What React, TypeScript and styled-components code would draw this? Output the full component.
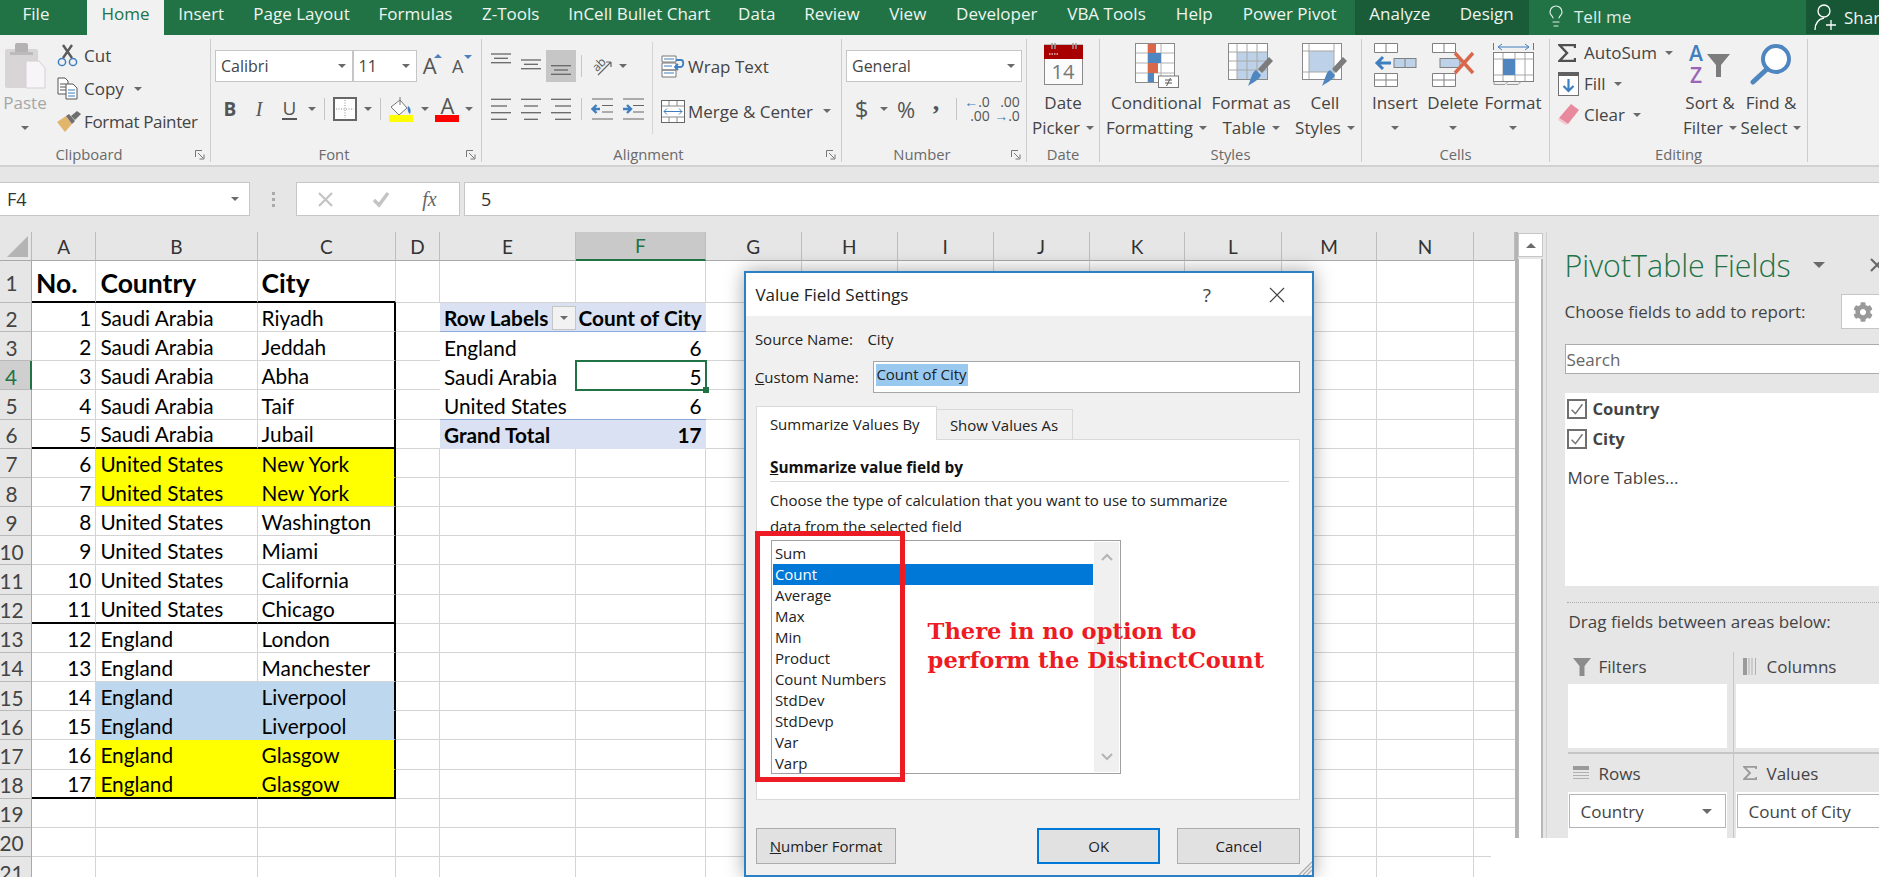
import React from "react";
import styled, { createGlobalStyle } from "styled-components";
import { Lightbulb } from "lucide-react";
import { FaCog } from "react-icons/fa";

const GlobalStyle = createGlobalStyle`
  html, body {
    margin: 0;
    padding: 0;
    background: #fff;
  }
  * {
    box-sizing: border-box;
  }
`;

const SEGOE = `"Open Sans", "Noto Sans", sans-serif`;
const CALIBRI = `Lato, "Liberation Sans", sans-serif`;

const Page = styled.div`
  position: relative;
  width: 1879px;
  height: 877px;
  overflow: hidden;
  display: flex;
  flex-direction: column;
  background: #e6e6e6;
  font-family: ${SEGOE};
  color: #444;
`;

/* ---------- title bar ---------- */

const TitleBar = styled.div`
  flex: none;
  height: 35px;
  display: flex;
  background: #217346;
  color: #eef5f0;
  font-size: 17px;
`;

const Tab = styled.div<{ $w: number; $active?: boolean; $shift?: number }>`
  flex: none;
  width: ${(p) => p.$w}px;
  padding-right: ${(p) => p.$shift || 0}px;
  text-align: center;
  line-height: 28px;
  white-space: nowrap;
  background: ${(p) => (p.$active ? "#f1f1f1" : "transparent")};
  color: ${(p) => (p.$active ? "#217346" : "inherit")};
`;

const ContextTabs = styled.div`
  flex: none;
  display: flex;
  margin-left: 3px;
  background: #1b5c38;
`;

const TellMe = styled.div`
  display: flex;
  align-items: center;
  gap: 6px;
  margin-left: 15px;
  padding-bottom: 3px;
  color: #dfece4;
  svg {
    flex: none;
  }
`;

const Share = styled.div`
  flex: none;
  margin-left: auto;
  width: 73px;
  padding-left: 8px;
  display: flex;
  align-items: center;
  gap: 8px;
  height: 34px;
  background: #185735;
  overflow: hidden;
  white-space: nowrap;
  svg {
    flex: none;
  }
`;

/* ---------- ribbon ---------- */

const Ribbon = styled.div`
  flex: none;
  height: 132px;
  padding-top: 4px;
  display: flex;
  align-items: flex-start;
  background: #f1f1f1;
  border-bottom: 2px solid #d2d2d2;
  font-size: 17px;
`;

const Group = styled.section<{ $w: number }>`
  flex: none;
  width: ${(p) => p.$w}px;
  height: 123px;
  display: flex;
  flex-direction: column;
  border-right: 1px solid #cdcdcd;
`;

const GroupBody = styled.div<{ $pad?: number }>`
  flex: 1;
  min-height: 0;
  display: flex;
  padding-left: ${(p) => p.$pad || 0}px;
`;

const GroupLabel = styled.div<{ $pad?: number }>`
  position: relative;
  flex: none;
  height: 16px;
  padding-right: ${(p) => p.$pad || 0}px;
  text-align: center;
  font-size: 14.8px;
  line-height: 17px;
  color: #6a6a6a;
`;

const Launcher = styled.svg`
  position: absolute;
  right: 5px;
  top: 4px;
`;

const Caret = styled.span<{ $gap?: number; $size?: number }>`
  display: inline-block;
  flex: none;
  justify-self: start;
  margin-left: ${(p) => p.$gap ?? 6}px;
  vertical-align: middle;
  border-left: ${(p) => p.$size || 4}px solid transparent;
  border-right: ${(p) => p.$size || 4}px solid transparent;
  border-top: ${(p) => p.$size || 4}px solid #6a6a6a;
`;

const BigButton = styled.div<{ $w: number; $muted?: boolean }>`
  flex: none;
  width: ${(p) => p.$w}px;
  display: flex;
  flex-direction: column;
  align-items: center;
  color: ${(p) => (p.$muted ? "#a6a6a6" : "#444")};
`;

const BigIcon = styled.div`
  flex: none;
  height: 52px;
  padding-top: 4px;
`;

const BigLine = styled.div`
  height: 24.5px;
  line-height: 24px;
  white-space: nowrap;
  display: flex;
  align-items: center;
  justify-content: center;
`;

const SmallStack = styled.div<{ $left: number; $w: number; $row: number; $top?: number }>`
  flex: none;
  margin-left: ${(p) => p.$left}px;
  margin-top: ${(p) => p.$top || 0}px;
  width: ${(p) => p.$w}px;
  display: grid;
  grid-auto-rows: ${(p) => p.$row}px;
`;

const SmallRow = styled.div<{ $slot?: number }>`
  display: grid;
  grid-template-columns: ${(p) => p.$slot || 27}px auto 1fr;
  align-items: center;
  white-space: nowrap;
`;

const Tight = styled.span`
  letter-spacing: -0.35px;
`;

const TwoRows = styled.div<{ $w?: number; $gap?: number }>`
  flex: none;
  width: ${(p) => (p.$w ? `${p.$w}px` : "auto")};
  padding-top: 11px;
  display: flex;
  flex-direction: column;
  gap: ${(p) => p.$gap ?? 11}px;
`;

const ToolRow = styled.div`
  height: 32px;
  display: flex;
  align-items: center;
`;

const Tool = styled.div<{ $w: number; $on?: boolean }>`
  flex: none;
  width: ${(p) => p.$w}px;
  height: 32px;
  display: flex;
  align-items: center;
  justify-content: center;
  background: ${(p) => (p.$on ? "#c6c6c6" : "transparent")};
  color: #555;
`;

const ToolRule = styled.div`
  width: 1px;
  height: 22px;
  background: #c6c6c6;
`;

const VRule = styled.div`
  flex: none;
  width: 1px;
  height: 92px;
  margin: 3px 8px 0 5px;
  background: #d4d4d4;
`;

const ComboBox = styled.div<{ $w: number }>`
  flex: none;
  width: ${(p) => p.$w}px;
  height: 32px;
  display: flex;
  align-items: center;
  justify-content: space-between;
  padding: 0 6px 0 5px;
  background: #fff;
  border: 1px solid #c6c6c6;
  font-size: 16px;
  color: #444;
`;

const FontGlyph = styled.span<{ $size: number; $weight?: number; $italic?: boolean; $serif?: boolean; $lift?: number }>`
  font-family: ${(p) => (p.$serif ? `"Liberation Serif", serif` : SEGOE)};
  font-size: ${(p) => p.$size}px;
  font-weight: ${(p) => p.$weight || 400};
  font-style: ${(p) => (p.$italic ? "italic" : "normal")};
  line-height: 1;
  color: #555;
  margin-bottom: ${(p) => p.$lift || 0}px;
`;

const GrowGlyph = styled.div`
  position: relative;
  width: 100%;
  text-align: center;
`;

const GrowArrow = styled.span<{ $down?: boolean }>`
  position: absolute;
  right: 1px;
  top: 0;
  border-left: 4px solid transparent;
  border-right: 4px solid transparent;
  ${(p) => (p.$down ? "border-top: 4px solid #4a80bb;" : "border-bottom: 4px solid #4a80bb;")}
`;

const Underlined = styled.span`
  border-bottom: 2px solid #555;
  padding: 0 1px;
  line-height: 18px;
`;

const DecimalStack = styled.div`
  display: grid;
  grid-template-columns: auto;
  justify-items: end;
  font-size: 14px;
  line-height: 14px;
  color: #555;
  span {
    color: #3f7fbf;
    font-weight: 700;
  }
`;

/* ---------- formula bar ---------- */

const FormulaBar = styled.div`
  flex: none;
  height: 65px;
  padding-top: 15px;
  display: flex;
  align-items: flex-start;
  background: #e6e6e6;
`;

const NameBox = styled.div`
  width: 250px;
  height: 34px;
  padding: 0 10px 0 7px;
  display: flex;
  align-items: center;
  justify-content: space-between;
  background: #fff;
  border: 1px solid #c6c6c6;
  border-left: none;
  font-size: 18px;
  color: #333;
`;

const Grip = styled.div`
  width: 46px;
  height: 34px;
  display: flex;
  flex-direction: column;
  align-items: center;
  justify-content: center;
  gap: 3px;
  i {
    display: block;
    width: 3px;
    height: 3px;
    background: #aaa;
  }
`;

const FxButtons = styled.div`
  width: 164px;
  height: 34px;
  display: grid;
  grid-template-columns: 57px 54px 1fr;
  align-items: center;
  justify-items: center;
  padding: 0 8px 0 0;
  background: #fff;
  border: 1px solid #c6c6c6;
`;

const FxText = styled.span`
  font-family: "Liberation Serif", serif;
  font-style: italic;
  font-size: 20px;
  color: #666;
`;

const FormulaInput = styled.div`
  flex: 1;
  height: 34px;
  margin-left: 4px;
  padding-left: 16px;
  display: flex;
  align-items: center;
  background: #fff;
  border: 1px solid #c6c6c6;
  border-right: none;
  font-size: 18px;
  color: #333;
`;

/* ---------- sheet ---------- */

const Workspace = styled.div`
  flex: 1;
  min-height: 0;
  display: flex;
`;

const Sheet = styled.div`
  flex: none;
  width: 1518px;
  height: 645px;
  overflow: hidden;
  display: grid;
  grid-template-columns: 32px 64.4px 161.2px 138.4px 44px 136px 129.7px 96.1px 95.8px 96.2px 95.8px 95.8px 96.2px 95.9px 96.1px 41.4px;
  grid-auto-rows: 29.17px;
  grid-template-rows: 29px 42px;
  align-content: start;
  background: #fff;
  border-right: 3px solid #b4b4b4;
  font-family: ${CALIBRI};
  font-size: 20.8px;
  color: #000;
`;

const Corner = styled.div`
  background: #e6e6e6;
  border-right: 1px solid #b9b9b9;
  border-bottom: 1px solid #a9a9a9;
  padding: 4px 0 0 7px;
`;

const ColHead = styled.div<{ $active?: boolean }>`
  display: flex;
  align-items: center;
  justify-content: center;
  font-size: 19px;
  background: ${(p) => (p.$active ? "#c9c9c9" : "#e6e6e6")};
  color: ${(p) => (p.$active ? "#217346" : "#333")};
  border-right: 1px solid #bdbdbd;
  border-bottom: ${(p) => (p.$active ? "2px solid #217346" : "1px solid #a9a9a9")};
`;

const RowHead = styled.div<{ $active?: boolean }>`
  display: flex;
  align-items: center;
  justify-content: center;
  padding: 2px 8px 0 0;
  background: ${(p) => (p.$active ? "#cfcfcf" : "#e6e6e6")};
  color: ${(p) => (p.$active ? "#217346" : "#444")};
  border-right: ${(p) => (p.$active ? "2px solid #217346" : "1px solid #a9a9a9")};
  border-bottom: 1px solid #b9b9b9;
`;

const Cell = styled.div<{
  $fill?: string;
  $right?: boolean;
  $bold?: boolean;
  $large?: boolean;
  $bottom?: string;
  $side?: string;
}>`
  position: relative;
  min-width: 0;
  display: flex;
  align-items: center;
  justify-content: ${(p) => (p.$right ? "flex-end" : "flex-start")};
  padding: ${(p) => (p.$large ? "3px 0 0 4px" : "1px 4px 0")};
  white-space: nowrap;
  background: ${(p) => p.$fill || "#fff"};
  font-weight: ${(p) => (p.$bold ? 700 : 400)};
  font-size: ${(p) => (p.$large ? "26.5px" : "inherit")};
  border-right: ${(p) => p.$side || "1px solid #d4d4d4"};
  border-bottom: ${(p) => p.$bottom || "1px solid #d4d4d4"};
`;

const FilterButton = styled.div`
  flex: none;
  width: 24px;
  height: 24px;
  margin-left: auto;
  margin-right: -4px;
  display: flex;
  align-items: center;
  justify-content: center;
  background: #f2f2f2;
  border: 1px solid #c6c6c6;
`;

const CellCursor = styled.div`
  position: absolute;
  inset: -1px;
  border: 2px solid #217346;
  z-index: 2;
`;

const FillHandle = styled.div`
  position: absolute;
  right: -4px;
  bottom: -4px;
  width: 6px;
  height: 6px;
  background: #217346;
`;

const ScrollBar = styled.div`
  flex: none;
  width: 25px;
  height: 645px;
  display: flex;
  flex-direction: column;
  gap: 2px;
  padding-top: 1px;
`;

const ScrollUp = styled.div`
  height: 24px;
  display: flex;
  align-items: center;
  justify-content: center;
  background: #fff;
  border: 1px solid #c6c6c6;
`;

const ScrollArrow = styled.span`
  border-left: 5px solid transparent;
  border-right: 5px solid transparent;
  border-bottom: 5px solid #6a6a6a;
`;

const ScrollTrack = styled.div`
  flex: 1;
  background: #fff;
  border-left: 1px solid #b8b8b8;
  border-right: 2px solid #b8b8b8;
`;

/* ---------- field list ---------- */

const FieldPane = styled.aside`
  flex: none;
  width: 336px;
  overflow: hidden;
  padding: 16px 0 0 17.5px;
  margin-left: 3px;
  border-left: 1px solid #cfcfcf;
  color: #444;
  font-size: 17px;
`;

const PaneTitle = styled.div`
  height: 34px;
  display: flex;
  align-items: center;
  white-space: nowrap;
  font-size: 30.4px;
  font-weight: 300;
  color: #217346;
`;

const PaneClose = styled.svg`
  margin-left: 44px;
  flex: none;
`;

const PaneRow = styled.div`
  height: 35px;
  margin-top: 12px;
  width: 340px;
  display: flex;
  align-items: center;
  white-space: nowrap;
`;

const GearBox = styled.div`
  flex: none;
  margin-left: auto;
  width: 64px;
  height: 35px;
  padding-left: 11px;
  display: flex;
  align-items: center;
  background: #fff;
  border: 1px solid #c6c6c6;
`;

const SearchBox = styled.div`
  height: 30px;
  width: 340px;
  margin-top: 15px;
  padding-left: 1px;
  display: flex;
  align-items: center;
  background: #fff;
  border: 1px solid #ababab;
  color: #666;
`;

const FieldList = styled.div`
  height: 193px;
  width: 340px;
  margin-top: 20px;
  padding: 0 0 0 2px;
  background: #fff;
`;

const FieldItem = styled.div`
  height: 31px;
  margin-top: -1px;
  display: flex;
  align-items: center;
  gap: 6px;
  font-size: 16.6px;
  font-weight: 700;
  color: #444;
`;

const Check = styled.span`
  flex: none;
  width: 20px;
  height: 20px;
  display: flex;
  align-items: center;
  justify-content: center;
  background: #fff;
  border: 2px solid #6f6f6f;
`;

const MoreTables = styled.div`
  margin-top: 12px;
  padding-left: 1px;
`;

const DottedRule = styled.div`
  width: 340px;
  margin: 16px 0 0 2px;
  border-top: 1px dotted #a9a9a9;
`;

const DragText = styled.div`
  margin: 7px 0 0 4px;
  height: 24px;
  line-height: 24px;
  white-space: nowrap;
`;

const Areas = styled.div`
  width: 340px;
  margin: 18px 0 0 3px;
  display: grid;
  grid-template-columns: 166px 1fr;
  grid-template-rows: 102px 84px;
`;

const Area = styled.div<{ $left?: boolean; $top?: boolean }>`
  min-width: 0;
  padding-left: ${(p) => (p.$left ? 0 : 2)}px;
  padding-right: ${(p) => (p.$left ? 6 : 0)}px;
  border-right: ${(p) => (p.$left ? "1px solid #c6c6c6" : "none")};
  border-bottom: ${(p) => (p.$top ? "2px solid #c6c6c6" : "none")};
`;

const AreaHead = styled.div<{ $h: number; $left?: boolean; $lift?: number }>`
  height: ${(p) => p.$h}px;
  padding-left: ${(p) => (p.$left ? 5 : 7)}px;
  padding-bottom: ${(p) => p.$lift || 0}px;
  display: grid;
  grid-template-columns: ${(p) => (p.$left ? 26 : 24)}px 1fr;
  align-items: center;
`;

const AreaBox = styled.div<{ $h: number }>`
  height: ${(p) => p.$h}px;
  padding: 2px 1px;
  background: #fff;
`;

const AreaChip = styled.div`
  height: 34px;
  padding: 0 13px 0 11px;
  display: flex;
  align-items: center;
  justify-content: space-between;
  white-space: nowrap;
  background: #fff;
  border: 1px solid #b4b4b4;
`;

const ScreenshotEdge = styled.div`
  position: absolute;
  left: 1491px;
  top: 838px;
  right: 0;
  bottom: 0;
  background: #fff;
  z-index: 3;
`;

/* ---------- dialog ---------- */

const Dialog = styled.div`
  position: absolute;
  left: 744.4px;
  top: 271px;
  width: 569.4px;
  height: 606px;
  display: flex;
  flex-direction: column;
  background: #f0f0f0;
  border: 2px solid #2b7fc4;
  box-shadow: 0 0 18px rgba(0, 0, 0, 0.35);
  color: #222;
  font-size: 15px;
  z-index: 2;
`;

const DialogTitle = styled.div`
  flex: none;
  height: 43px;
  display: flex;
  align-items: center;
  padding-left: 9px;
  background: #fff;
  font-size: 17px;
  color: #222;
`;

const TitleButton = styled.div<{ $first?: boolean }>`
  flex: none;
  width: 70px;
  margin-left: ${(p) => (p.$first ? "auto" : 0)};
  display: flex;
  justify-content: center;
  font-size: 19px;
  color: #444;
`;

const DialogBody = styled.div`
  flex: 1;
  padding: 11px 11.5px 0 9.5px;
`;

const FormRow = styled.div<{ $label: number; $top?: number; $h: number }>`
  height: ${(p) => p.$h}px;
  margin-top: ${(p) => p.$top || 0}px;
  margin-left: -1px;
  display: grid;
  grid-template-columns: ${(p) => p.$label + 1}px 1fr;
  align-items: center;
`;

const TextInput = styled.div`
  height: 32px;
  padding: 2px;
  background: #fff;
  border: 1px solid #a6a6a6;
`;

const Selected = styled.span`
  display: inline-block;
  height: 22px;
  line-height: 21px;
  padding-right: 1px;
  background: #99c9ef;
`;

const TabStrip = styled.div`
  margin-top: 13px;
  height: 34px;
  display: flex;
  align-items: flex-end;
  position: relative;
  z-index: 1;
`;

const DialogTab = styled.div<{ $active?: boolean }>`
  flex: none;
  width: ${(p) => (p.$active ? 181 : 136)}px;
  height: ${(p) => (p.$active ? 34 : 31)}px;
  padding-left: 13px;
  display: flex;
  align-items: center;
  white-space: nowrap;
  background: ${(p) => (p.$active ? "#fff" : "#f0f0f0")};
  border: 1px solid #d9d9d9;
  border-bottom: ${(p) => (p.$active ? "none" : "1px solid #d9d9d9")};
  border-left: ${(p) => (p.$active ? "1px solid #d9d9d9" : "none")};
`;

const TabPane = styled.div`
  height: 361px;
  margin-top: -1px;
  padding: 16px 0 0 13px;
  background: #fff;
  border: 1px solid #d9d9d9;
`;

const PaneHeading = styled.div`
  width: 519px;
  height: 26px;
  line-height: 24px;
  font-size: 15.4px;
  font-weight: 700;
  color: #111;
  border-bottom: 1px solid #d9d9d9;
`;

const Hotkey = styled.span`
  text-decoration: underline;
`;

const HelpText = styled.div`
  margin-top: 6px;
  line-height: 25.5px;
  white-space: nowrap;
`;

const ListBox = styled.div`
  margin: 1px 0 0 1px;
  width: 350.4px;
  height: 234px;
  display: flex;
  padding: 1px;
  background: #fff;
  border: 1px solid #a0a0a0;
`;

const ListItems = styled.div`
  flex: 1;
  padding-top: 1px;
`;

const ListItem = styled.div<{ $on?: boolean }>`
  height: 21px;
  line-height: 21px;
  padding-left: 2px;
  background: ${(p) => (p.$on ? "#0078d7" : "transparent")};
  color: ${(p) => (p.$on ? "#fff" : "#222")};
`;

const ListScroll = styled.div`
  flex: none;
  width: 25px;
  margin-left: 1px;
  padding: 11px 0;
  display: flex;
  flex-direction: column;
  align-items: center;
  justify-content: space-between;
  background: #f0f0f0;
`;

const DialogFooter = styled.div`
  margin-top: 28px;
  display: flex;
  height: 36px;
`;

const DialogButton = styled.div<{ $w: number; $primary?: boolean; $push?: boolean }>`
  flex: none;
  width: ${(p) => p.$w}px;
  margin-left: ${(p) => (p.$push ? "auto" : p.$primary ? 0 : "17px")};
  display: flex;
  align-items: center;
  justify-content: center;
  white-space: nowrap;
  background: #e1e1e1;
  border: ${(p) => (p.$primary ? "2px solid #0078d7" : "1px solid #adadad")};
`;

const NumberFormatButton = styled(DialogButton)`
  margin-left: 0;
`;

const RedBox = styled.div`
  position: absolute;
  left: 8.6px;
  top: 257.7px;
  width: 150px;
  height: 251px;
  border: 5px solid #ed1c24;
  pointer-events: none;
`;

const RedNote = styled.div`
  position: absolute;
  left: 181.2px;
  top: 344px;
  font-family: "DejaVu Serif", serif;
  font-weight: 700;
  font-size: 22.6px;
  line-height: 29px;
  white-space: nowrap;
  color: #ed1c24;
`;

const ResizeGrip = styled.svg`
  position: absolute;
  right: 0;
  bottom: 0;
`;

/* ---------- icons ---------- */

const PasteIcon = () => (
  <svg width="41" height="46" viewBox="0 0 41 46">
    <rect x="0" y="6" width="33" height="39" rx="2" fill="#d8d5d6" />
    <rect x="10" y="0" width="13" height="10" rx="2" fill="#b5b2b3" />
    <rect x="5" y="9" width="23" height="3" fill="#bdbabb" />
    <path d="M21 18h13l6 7v20H21z" fill="#f8f5f8" stroke="#d4d0d4" />
  </svg>
);

const ScissorsIcon = () => (
  <svg width="21" height="23" viewBox="0 0 21 23">
    <path d="M15 1 6 14M6 1l9 13" stroke="#5a5a5a" strokeWidth="2.4" fill="none" />
    <circle cx="5" cy="18" r="3.6" fill="none" stroke="#3f7fbf" strokeWidth="1.5" />
    <circle cx="16" cy="18" r="3.6" fill="none" stroke="#3f7fbf" strokeWidth="1.5" />
  </svg>
);

const CopyIcon = () => (
  <svg width="21" height="23" viewBox="0 0 21 23">
    <path d="M1 1h7l3 3v13H1z" fill="#fff" stroke="#555" />
    <path d="M3 7h6M3 10h6M3 13h6" stroke="#555" />
    <path d="M9 7h7l4 4v11H9z" fill="#fff" stroke="#555" />
    <path d="M11 13h7M11 16h7M11 19h7" stroke="#3f7fbf" />
  </svg>
);

const PainterIcon = () => (
  <svg width="24" height="21" viewBox="0 0 24 21">
    <path d="M0 11 9 5l6 8-7 8z" fill="#e2b56d" />
    <path d="M9 5l3-2 6 7-3 3z" fill="#6f6f6f" />
    <path d="M14 5l6-5 4 3-6 6z" fill="#6f6f6f" />
  </svg>
);

const LauncherIcon = () => (
  <Launcher width="10" height="10" viewBox="0 0 10 10">
    <path d="M.5 7V.5H7M3 3l5 5M9 4.5V9H4.5" stroke="#777" fill="none" />
  </Launcher>
);

const BorderIcon = () => (
  <svg width="24" height="24" viewBox="0 0 24 24">
    <rect x="1" y="1" width="22" height="22" fill="#fff" stroke="#666" strokeWidth="2" />
    <path d="M12 3v18M3 12h18" stroke="#888" strokeDasharray="1 1.5" />
  </svg>
);

const FillColorIcon = () => (
  <svg width="25" height="25" viewBox="0 0 25 25">
    <path d="M2 10 11 3l7 8-8 7z" fill="#fff" stroke="#777" />
    <path d="M11 0v8" stroke="#777" />
    <path d="M19 9c3 2 3 5 2 8-2-1-3-5-2-8z" fill="#3f7fbf" />
    <rect x="0" y="18" width="24" height="7" fill="#ffff00" />
  </svg>
);

const FontColorIcon = () => (
  <svg width="25" height="25" viewBox="0 0 25 25">
    <text x="12.5" y="17" textAnchor="middle" fontFamily="Open Sans" fontSize="22" fill="#555">A</text>
    <rect x="0" y="18" width="24" height="7" fill="#ff0000" />
  </svg>
);

// align icons: each row is [from, to, y] inside the 32px tool cell
const Lines = ({ rows }: { rows: [number, number, number][] }) => (
  <svg width="20" height="32" viewBox="0 0 20 32">
    {rows.map(([x1, x2, y]) => (
      <path key={`${x1}-${y}`} d={`M${x1} ${y}H${x2}`} stroke="#666" strokeWidth="1.3" />
    ))}
  </svg>
);

const OrientationIcon = () => (
  <svg width="22" height="20" viewBox="0 0 22 20">
    <text x="1" y="13" transform="rotate(-45 7 10)" fontFamily="Open Sans" fontSize="12" fill="#555">ab</text>
    <path d="M6 19 19 6M19 6h-5M19 6v5" stroke="#666" strokeWidth="1.2" fill="none" />
  </svg>
);

const IndentIcon = ({ dir }: { dir: "in" | "out" }) => (
  <svg width="23" height="22" viewBox="0 0 23 22">
    <path d="M1 1h21M11 7.500h11M11 14h11M1 21h21" stroke="#666" strokeWidth="1.2" />
    {dir === "out" ? (
      <path d="M9 11H2m3.500-4L1.500 11l4 4" stroke="#3f7fbf" strokeWidth="2.400" fill="none" />
    ) : (
      <path d="M1 11h7M5 7l4 4-4 4" stroke="#3f7fbf" strokeWidth="2.400" fill="none" />
    )}
  </svg>
);

const WrapIcon = () => (
  <svg width="24" height="23" viewBox="0 0 24 23">
    <path d="M1 1h14v6H1zM1 8h14v7H1zM1 15h14v7H1z" fill="#fff" stroke="#777" />
    <path d="M3 4h10M3 11h8M3 18h10" stroke="#3f7fbf" strokeWidth="1.2" />
    <path d="M15 5h5c3 0 3 6 0 7h-6m3-3-3 3 3 3" stroke="#3f7fbf" strokeWidth="1.8" fill="none" />
  </svg>
);

const MergeIcon = () => (
  <svg width="24" height="23" viewBox="0 0 24 23">
    <rect x=".5" y=".5" width="23" height="22" fill="#fff" stroke="#666" />
    <path d="M1 6h22M1 17h22M8 1v5M16 1v5M8 17v5M16 17v5" stroke="#888" />
    <path d="M3 11.500h18M6 8.500l-3 3 3 3M18 8.500l3 3-3 3" stroke="#3f7fbf" fill="none" />
  </svg>
);

const CalendarIcon = () => (
  <svg width="39" height="42" viewBox="0 0 39 42">
    <rect x=".5" y="2" width="38" height="39.500" fill="#fbfbfb" stroke="#8a8a8a" />
    <rect x="0" y="2" width="39" height="14" fill="#a80000" />
    <path d="M8 0v6M11 0v6M29 0v6M32 0v6" stroke="#9c9c9c" strokeWidth="1.5" />
    <path d="M5 11h10" stroke="#e8b9b9" strokeDasharray="1.5 1" strokeWidth="1.5" />
    <text x="19" y="36" textAnchor="middle" fontFamily="Open Sans" fontSize="20" fill="#777">14</text>
  </svg>
);

const CondFormatIcon = () => (
  <svg width="44" height="45" viewBox="0 0 44 45">
    <rect x=".5" y=".5" width="39" height="39" fill="#fff" stroke="#8a8a8a" />
    <path d="M13 1v38M26 1v38M1 10h38M1 20h38M1 30h38" stroke="#b0b0b0" />
    <rect x="13" y="1" width="8" height="9" fill="#d9674a" />
    <rect x="13" y="10" width="13" height="10" fill="#4f86bf" />
    <rect x="13" y="20" width="10" height="10" fill="#d9674a" />
    <rect x="13" y="30" width="6" height="9" fill="#4f86bf" />
    <rect x="23.500" y="33" width="20" height="11.500" fill="#fff" stroke="#777" />
    <path d="M30 37h7M30 40h7M35.500 35l-4 8" stroke="#555" />
  </svg>
);

const TableBrushIcon = ({ w = 46, cells = true }: { w?: number; cells?: boolean }) => (
  <svg width={w} height="46" viewBox="0 0 46 46">
    <rect x=".5" y=".5" width="39" height="36" fill="#fff" stroke="#8a8a8a" />
    {cells ? (
      <>
        <rect x="9" y="9" width="30" height="27" fill="#bdd2e8" />
        <path d="M9 1v35M19 1v35M29 1v35M1 9h38M1 18h38M1 27h38" stroke="#a8a8a8" />
      </>
    ) : (
      <>
        <rect x="7" y="8" width="25" height="21" fill="#bdd2e8" stroke="#a8a8a8" />
        <path d="M7 1v7M1 8h6M1 29h6M32 1v7M32 29v7M7 29v7" stroke="#a8a8a8" />
      </>
    )}
    <path d="M30 26 41 14l4 4-11 12z" fill="#7c7c7c" />
    <path d="M28 27l5 5c-2 5-6 6-13 11 3-7 4-14 8-16z" fill="#4f86bf" />
  </svg>
);

const InsertIcon = () => (
  <svg width="43" height="44" viewBox="0 0 43 44">
    <path d="M.5.500h23v9h-23zM12 .5v9M.5 30.500h23v13h-23zM.5 37h23M12 30.500v13" fill="#fff" stroke="#808080" />
    <rect x="20" y="15.500" width="22" height="9" fill="#bdd2e8" stroke="#808080" />
    <path d="M31 16v8" stroke="#808080" />
    <path d="M17 20H3m6-6-6 6 6 6" stroke="#3f7fbf" strokeWidth="3" fill="none" />
  </svg>
);

const DeleteIcon = () => (
  <svg width="43" height="44" viewBox="0 0 43 44">
    <path d="M.5.500h23v9h-23zM12 .5v9M.5 30.500h23v13h-23zM.5 37h23M12 30.500v13" fill="#fff" stroke="#808080" />
    <rect x="8" y="15.500" width="20" height="9" fill="#bdd2e8" stroke="#808080" />
    <path d="M23 10l18 20M41 10 23 30" stroke="#d9674a" strokeWidth="3.4" />
  </svg>
);

const FormatCellsIcon = () => (
  <svg width="41" height="44" viewBox="0 0 41 44">
    <path d="M.5 0v7M40.500 0v7M5 4h31M9 1 5 4l4 3M32 1l4 3-4 3" stroke="#3f7fbf" fill="none" />
    <rect x=".5" y="9.500" width="40" height="29" fill="#fff" stroke="#808080" />
    <path d="M10 10v28M22 10v28M32 10v28M1 16h39M1 32h39" stroke="#a8a8a8" />
    <rect x="10" y="16" width="12" height="16" fill="#4f86bf" />
    <path d="M1 38.500v3h11l3-3M14 41.500h11l3-3" stroke="#9a9a9a" fill="none" />
  </svg>
);

const SigmaIcon = ({ color = "#505050", w = 18, h = 18 }: { color?: string; w?: number; h?: number }) => (
  <svg width={w} height={h} viewBox="0 0 18 18">
    <path d="M17 4V1H1.500L9 9l-7.500 8H17v-3" fill="none" stroke={color} strokeWidth="2.400" />
  </svg>
);

const FillIcon = () => (
  <svg width="21" height="24" viewBox="0 0 21 24">
    <rect x=".5" y=".5" width="20" height="23" fill="#fff" stroke="#707070" />
    <rect x="0" y="0" width="21" height="4" fill="#606060" />
    <path d="M10.500 7v11m-5-4 5 5 5-5" stroke="#3f7fbf" strokeWidth="2.200" fill="none" />
  </svg>
);

const EraserIcon = () => (
  <svg width="21" height="21" viewBox="0 0 21 21">
    <path d="M13 0l8 6-11 14-9-6z" fill="#e9899d" />
    <path d="M1 14l9 6-2 1-8-5z" fill="#f4c7d0" />
  </svg>
);

const SortFilterIcon = () => (
  <svg width="44" height="44" viewBox="0 0 44 44">
    <text x="8" y="18" textAnchor="middle" fontFamily="Open Sans" fontWeight="600" fontSize="21" fill="#3f7fbf">A</text>
    <text x="8" y="40" textAnchor="middle" fontFamily="Open Sans" fontWeight="600" fontSize="21" fill="#9a64b8">Z</text>
    <path d="M19 11h23l-9 11v12h-5V22z" fill="#7c7c7c" />
  </svg>
);

const FindIcon = () => (
  <svg width="42" height="42" viewBox="0 0 42 42">
    <circle cx="26" cy="16" r="13" fill="#fff" stroke="#4f86bf" strokeWidth="4" />
    <path d="M17 26 3 39" stroke="#4f86bf" strokeWidth="5" strokeLinecap="round" />
  </svg>
);

const PersonPlusIcon = () => (
  <svg width="22" height="27" viewBox="0 0 22 27">
    <circle cx="10" cy="7" r="6" fill="none" stroke="#fff" strokeWidth="1.300" />
    <path d="M1 26c0-7 4-11 9-12M12 21h10M17 16v10" fill="none" stroke="#fff" strokeWidth="1.300" />
  </svg>
);

const CrossIcon = ({ size = 16, color = "#444", width = 1.2 }: { size?: number; color?: string; width?: number }) => (
  <svg width={size} height={size} viewBox="0 0 16 16">
    <path d="M1 1l14 14M15 1 1 15" stroke={color} strokeWidth={width} />
  </svg>
);

const TickIcon = ({ color = "#c4c4c4", size = 18, width = 3.5 }: { color?: string; size?: number; width?: number }) => (
  <svg width={size} height={size} viewBox="0 0 18 18">
    <path d="M2 10l5 5L16 3" fill="none" stroke={color} strokeWidth={width} />
  </svg>
);

const Chevron = ({ up }: { up?: boolean }) => (
  <svg width="12" height="8" viewBox="0 0 12 8">
    <path d={up ? "M1 7l5-5 5 5" : "M1 1l5 5 5-5"} fill="none" stroke="#b5b5b5" strokeWidth="2" />
  </svg>
);

const FunnelIcon = () => (
  <svg width="18" height="18" viewBox="0 0 18 18">
    <path d="M0 0h18l-6.500 8v10h-5V8z" fill="#8c8c8c" />
  </svg>
);

const ColumnsIcon = () => (
  <svg width="14" height="17" viewBox="0 0 14 17">
    <rect x="0" y="0" width="4" height="17" fill="#9a9a9a" />
    <path d="M6 0v17M9 0v17M12.500 0v17" stroke="#b0b0b0" />
  </svg>
);

const RowsIcon = () => (
  <svg width="16" height="14" viewBox="0 0 16 14">
    <rect x="0" y="0" width="16" height="4" fill="#9a9a9a" />
    <path d="M0 6.500h16M0 9.500h16M0 12.500h16" stroke="#b0b0b0" />
  </svg>
);

const SheetCorner = () => (
  <svg width="21" height="21" viewBox="0 0 21 21">
    <path d="M21 0v21H0z" fill="#b4b4b4" />
  </svg>
);

/* ---------- data ---------- */

const COLUMNS = ["A", "B", "C", "D", "E", "F", "G", "H", "I", "J", "K", "L", "M", "N", ""];

const TABS: [string, number][] = [
  ["Insert", 74.5],
  ["Page Layout", 126],
  ["Formulas", 102],
  ["Z-Tools", 88.5],
  ["InCell Bullet Chart", 168.5],
  ["Data", 66.5],
  ["Review", 84],
  ["View", 67.5],
  ["Developer", 110.5],
  ["VBA Tools", 109],
  ["Help", 66.5],
  ["Power Pivot", 124.5],
];

const DATA: [number, string, string][] = [
  [1, "Saudi Arabia", "Riyadh"],
  [2, "Saudi Arabia", "Jeddah"],
  [3, "Saudi Arabia", "Abha"],
  [4, "Saudi Arabia", "Taif"],
  [5, "Saudi Arabia", "Jubail"],
  [6, "United States", "New York"],
  [7, "United States", "New York"],
  [8, "United States", "Washington"],
  [9, "United States", "Miami"],
  [10, "United States", "California"],
  [11, "United States", "Chicago"],
  [12, "England", "London"],
  [13, "England", "Manchester"],
  [14, "England", "Liverpool"],
  [15, "England", "Liverpool"],
  [16, "England", "Glasgow"],
  [17, "England", "Glasgow"],
];

const FILLS: Record<number, string> = {
  6: "#ffff00",
  7: "#ffff00",
  14: "#bdd7ee",
  15: "#bdd7ee",
  16: "#ffff00",
  17: "#ffff00",
};

const THICK_AFTER = [5, 11, 17];
const BLACK = "2px solid #000";
const PIVOT_FILL = "#d9e1f2";
const PIVOT_LINE = "1px solid #8ea9db";

const PIVOT: Record<number, [string, string]> = {
  3: ["England", "6"],
  4: ["Saudi Arabia", "5"],
  5: ["United States", "6"],
};

const SUMMARIES = ["Sum", "Count", "Average", "Max", "Min", "Product", "Count Numbers", "StdDev", "StdDevp", "Var", "Varp"];

const Blank = styled.div<{ $noRight?: boolean }>`
  border-right: ${(p) => (p.$noRight ? "none" : "1px solid #d4d4d4")};
  border-bottom: 1px solid #d4d4d4;
`;

function renderRow(row: number) {
  const cells: React.ReactNode[] = [];
  const entry = DATA[row - 2];
  const inPivot = row >= 2 && row <= 6;

  cells.push(
    <RowHead key="head" $active={row === 4}>
      {row}
    </RowHead>
  );

  if (row === 1) {
    cells.push(
      <Cell key="a" $large $bold $bottom={BLACK}>No.</Cell>,
      <Cell key="b" $large $bold $bottom={BLACK}>Country</Cell>,
      <Cell key="c" $large $bold $bottom={BLACK}>City</Cell>
    );
  } else if (entry) {
    const bottom = THICK_AFTER.includes(entry[0]) ? BLACK : undefined;
    const fill = FILLS[entry[0]];
    const noLine = fill ? `1px solid ${fill}` : undefined;
    const nextFill = FILLS[entry[0] + 1];
    cells.push(
      <Cell key="a" $right $bottom={bottom}>{entry[0]}</Cell>,
      <Cell key="b" $fill={fill} $side={noLine} $bottom={bottom || (fill && nextFill ? noLine : undefined)}>
        {entry[1]}
      </Cell>,
      <Cell key="c" $fill={fill} $side={BLACK} $bottom={bottom || (fill && nextFill ? noLine : undefined)}>
        {entry[2]}
      </Cell>
    );
  } else {
    cells.push(<Blank key="a" />, <Blank key="b" />, <Blank key="c" />);
  }

  cells.push(<Blank key="d" $noRight={inPivot} />);

  if (row === 2) {
    cells.push(
      <Cell key="e" $bold $fill={PIVOT_FILL} $side="none" $bottom={PIVOT_LINE}>
        Row Labels
        <FilterButton>
          <Caret $gap={0} />
        </FilterButton>
      </Cell>,
      <Cell key="f" $bold $right $fill={PIVOT_FILL} $side="none" $bottom={PIVOT_LINE}>
        Count of City
      </Cell>
    );
  } else if (row === 6) {
    cells.push(
      <Cell key="e" $bold $fill={PIVOT_FILL} $side="none" $bottom="none">Grand Total</Cell>,
      <Cell key="f" $bold $right $fill={PIVOT_FILL} $side="none" $bottom="none">17</Cell>
    );
  } else if (PIVOT[row]) {
    const edge = row === 5 ? PIVOT_LINE : "none";
    cells.push(
      <Cell key="e" $side="none" $bottom={edge}>{PIVOT[row][0]}</Cell>,
      <Cell key="f" $right $side="none" $bottom={edge}>
        {PIVOT[row][1]}
        {row === 4 && (
          <CellCursor>
            <FillHandle />
          </CellCursor>
        )}
      </Cell>
    );
  } else {
    cells.push(<Blank key="e" />, <Blank key="f" />);
  }

  for (let c = 6; c < 15; c++) {
    cells.push(<Blank key={c} $noRight={c === 14} />);
  }

  return <React.Fragment key={row}>{cells}</React.Fragment>;
}

export default function App() {
  const rowNumbers = Array.from({ length: 21 }, (_, i) => i + 1);

  return (
    <Page>
      <GlobalStyle />

      <TitleBar>
        <Tab $w={87} $shift={15}>File</Tab>
        <Tab $w={77} $active>Home</Tab>
        {TABS.map(([name, w]) => (
          <Tab key={name} $w={w}>{name}</Tab>
        ))}
        <ContextTabs>
          <Tab $w={89.5}>Analyze</Tab>
          <Tab $w={84.5}>Design</Tab>
        </ContextTabs>
        <TellMe>
          <Lightbulb size={24} strokeWidth={1.2} />
          Tell me
        </TellMe>
        <Share>
          <PersonPlusIcon />
          Share
        </Share>
      </TitleBar>

      <Ribbon>
        <Group $w={211}>
          <GroupBody>
            <BigButton $w={50} $muted>
              <BigIcon><PasteIcon /></BigIcon>
              <BigLine>Paste</BigLine>
              <BigLine><Caret $gap={0} /></BigLine>
            </BigButton>
            <SmallStack $left={7} $w={150} $row={33}>
              <SmallRow><ScissorsIcon /><span>Cut</span></SmallRow>
              <SmallRow><CopyIcon /><span>Copy</span><Caret $gap={10} /></SmallRow>
              <SmallRow><PainterIcon /><Tight>Format Painter</Tight></SmallRow>
            </SmallStack>
          </GroupBody>
          <GroupLabel $pad={32}>Clipboard<LauncherIcon /></GroupLabel>
        </Group>

        <Group $w={271}>
          <GroupBody $pad={4}>
            <TwoRows>
              <ToolRow>
                <ComboBox $w={137.6}>Calibri<Caret $gap={0} /></ComboBox>
                <ComboBox $w={64}>11<Caret $gap={0} /></ComboBox>
                <Tool $w={26}>
                  <GrowGlyph><FontGlyph $size={22}>A</FontGlyph><GrowArrow /></GrowGlyph>
                </Tool>
                <Tool $w={30}>
                  <GrowGlyph><FontGlyph $size={18}>A</FontGlyph><GrowArrow $down /></GrowGlyph>
                </Tool>
              </ToolRow>
              <ToolRow>
                <Tool $w={30}><FontGlyph $size={19} $weight={700}>B</FontGlyph></Tool>
                <Tool $w={28}><FontGlyph $size={20} $italic $serif>I</FontGlyph></Tool>
                <Tool $w={33}><Underlined><FontGlyph $size={19}>U</FontGlyph></Underlined></Tool>
                <Tool $w={12}><Caret $gap={0} /></Tool>
                <Tool $w={13}><ToolRule /></Tool>
                <Tool $w={28}><BorderIcon /></Tool>
                <Tool $w={17}><Caret $gap={0} /></Tool>
                <Tool $w={9}><ToolRule /></Tool>
                <Tool $w={33}><FillColorIcon /></Tool>
                <Tool $w={13}><Caret $gap={0} /></Tool>
                <Tool $w={32}><FontColorIcon /></Tool>
                <Tool $w={12}><Caret $gap={0} /></Tool>
              </ToolRow>
            </TwoRows>
          </GroupBody>
          <GroupLabel $pad={24}>Font<LauncherIcon /></GroupLabel>
        </Group>

        <Group $w={360}>
          <GroupBody $pad={4}>
            <TwoRows $w={161}>
              <ToolRow>
                <Tool $w={30}><Lines rows={[[0, 20, 4], [3, 17, 8.3], [0, 20, 12.7]]} /></Tool>
                <Tool $w={30}><Lines rows={[[0, 20, 10], [3, 17, 14.3], [0, 20, 18.7]]} /></Tool>
                <Tool $w={30} $on><Lines rows={[[0, 20, 15.7], [3, 17, 20], [0, 20, 24.3]]} /></Tool>
                <Tool $w={10}><ToolRule /></Tool>
                <Tool $w={33}><OrientationIcon /></Tool>
                <Tool $w={8}><Caret $gap={0} /></Tool>
              </ToolRow>
              <ToolRow>
                <Tool $w={30}><Lines rows={[[0, 20, 6.3], [0, 16, 13], [0, 20, 19.7], [0, 16, 26.3]]} /></Tool>
                <Tool $w={30}><Lines rows={[[0, 20, 6.3], [3, 17, 13], [0, 20, 19.7], [3, 17, 26.3]]} /></Tool>
                <Tool $w={30}><Lines rows={[[0, 20, 6.3], [4, 20, 13], [0, 20, 19.7], [4, 20, 26.3]]} /></Tool>
                <Tool $w={10}><ToolRule /></Tool>
                <Tool $w={33}><IndentIcon dir="out" /></Tool>
                <Tool $w={28}><IndentIcon dir="in" /></Tool>
              </ToolRow>
            </TwoRows>
            <VRule />
            <TwoRows $gap={13}>
              <ToolRow>
                <SmallRow><WrapIcon /><span>Wrap Text</span></SmallRow>
              </ToolRow>
              <ToolRow>
                <SmallRow><MergeIcon /><span>Merge &amp; Center</span><Caret $gap={10} /></SmallRow>
              </ToolRow>
            </TwoRows>
          </GroupBody>
          <GroupLabel $pad={26}>Alignment<LauncherIcon /></GroupLabel>
        </Group>

        <Group $w={185}>
          <GroupBody $pad={4}>
            <TwoRows>
              <ToolRow>
                <ComboBox $w={175.6}>General<Caret $gap={0} /></ComboBox>
              </ToolRow>
              <ToolRow>
                <Tool $w={31}><FontGlyph $size={24}>$</FontGlyph></Tool>
                <Tool $w={13}><Caret $gap={0} /></Tool>
                <Tool $w={32}><FontGlyph $size={22}>%</FontGlyph></Tool>
                <Tool $w={28}><FontGlyph $size={26} $weight={700} $serif $lift={14}>,</FontGlyph></Tool>
                <Tool $w={12}><ToolRule /></Tool>
                <Tool $w={30}><DecimalStack><div><span>←</span>.0</div><div>.00</div></DecimalStack></Tool>
                <Tool $w={30}><DecimalStack><div>.00</div><div><span>→</span>.0</div></DecimalStack></Tool>
              </ToolRow>
            </TwoRows>
          </GroupBody>
          <GroupLabel $pad={24}>Number<LauncherIcon /></GroupLabel>
        </Group>

        <Group $w={73}>
          <GroupBody>
            <BigButton $w={72}>
              <BigIcon><CalendarIcon /></BigIcon>
              <BigLine>Date</BigLine>
              <BigLine>Picker<Caret /></BigLine>
            </BigButton>
          </GroupBody>
          <GroupLabel>Date</GroupLabel>
        </Group>

        <Group $w={262}>
          <GroupBody $pad={5}>
            <BigButton $w={103}>
              <BigIcon><CondFormatIcon /></BigIcon>
              <BigLine>Conditional</BigLine>
              <BigLine>Formatting<Caret /></BigLine>
            </BigButton>
            <BigButton $w={86}>
              <BigIcon><TableBrushIcon /></BigIcon>
              <BigLine>Format as</BigLine>
              <BigLine>Table<Caret /></BigLine>
            </BigButton>
            <BigButton $w={62}>
              <BigIcon><TableBrushIcon cells={false} /></BigIcon>
              <BigLine>Cell</BigLine>
              <BigLine>Styles<Caret /></BigLine>
            </BigButton>
          </GroupBody>
          <GroupLabel>Styles</GroupLabel>
        </Group>

        <Group $w={188}>
          <GroupBody>
            <BigButton $w={66}>
              <BigIcon><InsertIcon /></BigIcon>
              <BigLine>Insert</BigLine>
              <BigLine><Caret $gap={0} /></BigLine>
            </BigButton>
            <BigButton $w={50}>
              <BigIcon><DeleteIcon /></BigIcon>
              <BigLine>Delete</BigLine>
              <BigLine><Caret $gap={0} /></BigLine>
            </BigButton>
            <BigButton $w={70}>
              <BigIcon><FormatCellsIcon /></BigIcon>
              <BigLine>Format</BigLine>
              <BigLine><Caret $gap={0} /></BigLine>
            </BigButton>
          </GroupBody>
          <GroupLabel>Cells</GroupLabel>
        </Group>

        <Group $w={258}>
          <GroupBody>
            <SmallStack $left={8} $w={126} $row={31} $top={-2}>
              <SmallRow $slot={26}><SigmaIcon /><span>AutoSum</span><Caret $gap={8} /></SmallRow>
              <SmallRow $slot={26}><FillIcon /><span>Fill</span><Caret $gap={8} /></SmallRow>
              <SmallRow $slot={26}><EraserIcon /><span>Clear</span><Caret $gap={8} /></SmallRow>
            </SmallStack>
            <BigButton $w={52}>
              <BigIcon><SortFilterIcon /></BigIcon>
              <BigLine>Sort &amp;</BigLine>
              <BigLine>Filter<Caret /></BigLine>
            </BigButton>
            <BigButton $w={70}>
              <BigIcon><FindIcon /></BigIcon>
              <BigLine>Find &amp;</BigLine>
              <BigLine>Select<Caret /></BigLine>
            </BigButton>
          </GroupBody>
          <GroupLabel>Editing</GroupLabel>
        </Group>
      </Ribbon>

      <FormulaBar>
        <NameBox>F4<Caret $gap={0} /></NameBox>
        <Grip><i /><i /><i /></Grip>
        <FxButtons>
          <CrossIcon color="#c4c4c4" width={2.4} size={15} />
          <TickIcon />
          <FxText>fx</FxText>
        </FxButtons>
        <FormulaInput>5</FormulaInput>
      </FormulaBar>

      <Workspace>
        <Sheet>
          <Corner><SheetCorner /></Corner>
          {COLUMNS.map((c, i) => (
            <ColHead key={i} $active={c === "F"}>{c}</ColHead>
          ))}
          {rowNumbers.map(renderRow)}
        </Sheet>

        <ScrollBar>
          <ScrollUp><ScrollArrow /></ScrollUp>
          <ScrollTrack />
        </ScrollBar>

        <FieldPane>
          <PaneTitle>
            PivotTable Fields
            <Caret $gap={22} $size={6} />
            <PaneClose width="16" height="16" viewBox="0 0 16 16">
              <path d="M2 2l12 12M14 2 2 14" stroke="#666" strokeWidth="2" />
            </PaneClose>
          </PaneTitle>
          <PaneRow>
            Choose fields to add to report:
            <GearBox><FaCog size={20} color="#999" /></GearBox>
          </PaneRow>
          <SearchBox>Search</SearchBox>
          <FieldList>
            <FieldItem><Check><TickIcon color="#777" size={14} width={2} /></Check>Country</FieldItem>
            <FieldItem><Check><TickIcon color="#777" size={14} width={2} /></Check>City</FieldItem>
            <MoreTables>More Tables...</MoreTables>
          </FieldList>
          <DottedRule />
          <DragText>Drag fields between areas below:</DragText>
          <Areas>
            <Area $left $top>
              <AreaHead $h={32} $left $lift={3}><FunnelIcon />Filters</AreaHead>
              <AreaBox $h={64} />
            </Area>
            <Area $top>
              <AreaHead $h={32} $lift={3}><ColumnsIcon />Columns</AreaHead>
              <AreaBox $h={64} />
            </Area>
            <Area $left>
              <AreaHead $h={38} $left><RowsIcon />Rows</AreaHead>
              <AreaBox $h={46}>
                <AreaChip>Country<Caret $gap={0} $size={5} /></AreaChip>
              </AreaBox>
            </Area>
            <Area>
              <AreaHead $h={38}><SigmaIcon color="#9a9a9a" w={14} h={14} />Values</AreaHead>
              <AreaBox $h={46}>
                <AreaChip>Count of City<Caret $gap={0} $size={5} /></AreaChip>
              </AreaBox>
            </Area>
          </Areas>
        </FieldPane>
      </Workspace>

      <ScreenshotEdge />

      <Dialog>
        <DialogTitle>
          Value Field Settings
          <TitleButton $first>?</TitleButton>
          <TitleButton><CrossIcon /></TitleButton>
        </DialogTitle>
        <DialogBody>
          <FormRow $label={111.5} $h={24}>
            <span>Source Name:</span>
            <span>City</span>
          </FormRow>
          <FormRow $label={117.5} $h={32} $top={10}>
            <span><Hotkey>C</Hotkey>ustom Name:</span>
            <TextInput><Selected>Count of City</Selected></TextInput>
          </FormRow>
          <TabStrip>
            <DialogTab $active>Summarize Values By</DialogTab>
            <DialogTab>Show Values As</DialogTab>
          </TabStrip>
          <TabPane>
            <PaneHeading><Hotkey>S</Hotkey>ummarize value field by</PaneHeading>
            <HelpText>
              Choose the type of calculation that you want to use to summarize
              <br />
              data from the selected field
            </HelpText>
            <ListBox>
              <ListItems>
                {SUMMARIES.map((s) => (
                  <ListItem key={s} $on={s === "Count"}>{s}</ListItem>
                ))}
              </ListItems>
              <ListScroll>
                <Chevron up />
                <Chevron />
              </ListScroll>
            </ListBox>
          </TabPane>
          <DialogFooter>
            <NumberFormatButton $w={140.3}><span><Hotkey>N</Hotkey>umber Format</span></NumberFormatButton>
            <DialogButton $w={123} $primary $push>OK</DialogButton>
            <DialogButton $w={123}>Cancel</DialogButton>
          </DialogFooter>
        </DialogBody>
        <ResizeGrip width="14" height="14" viewBox="0 0 14 14">
          <path d="M14 1 1 14M14 5 5 14M14 9 9 14" stroke="#a8a8a8" strokeWidth="1.2" />
        </ResizeGrip>
        <RedBox />
        <RedNote>
          There in no option to
          <br />
          perform the DistinctCount
        </RedNote>
      </Dialog>
    </Page>
  );
}
